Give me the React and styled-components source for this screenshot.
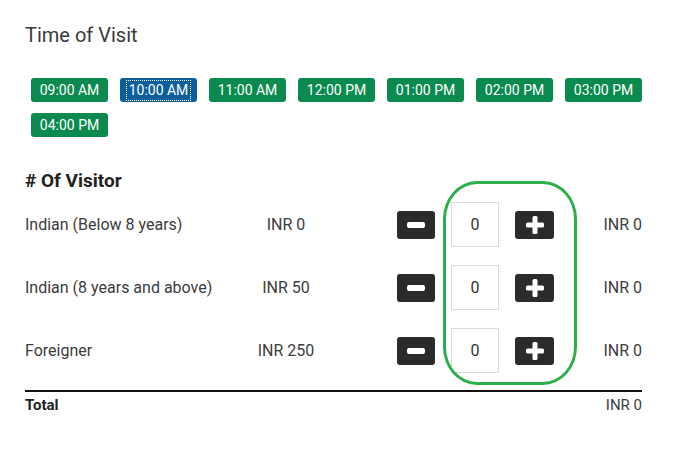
import React from "react";
import styled, { createGlobalStyle } from "styled-components";

const Global = createGlobalStyle`
  html, body { margin: 0; padding: 0; background: #fff; }
  body { font-family: Roboto, "Liberation Sans", Arial, sans-serif; color: #3c3c3c; }
`;

const Page = styled.div`
  position: relative;
  width: 687px;
  height: 458px;
  padding: 23px 25px 0 25px;
  box-sizing: border-box;
`;

const Title = styled.h2`
  margin: 0;
  font-size: 20px;
  line-height: 24px;
  font-weight: 400;
  color: #3a3a3a;
`;

const Slots = styled.div`
  display: flex;
  flex-wrap: wrap;
  row-gap: 11px;
  margin-top: 31px;
  width: 630px;
`;

const Slot = styled.button`
  width: 77px;
  height: 24px;
  margin: 0 6px;
  padding: 0;
  border: none;
  border-radius: 3px;
  background: ${(p) => (p.$active ? "#0d5e9d" : "#0b8a50")};
  color: #fff;
  font-family: Roboto, "Liberation Sans", Arial, sans-serif;
  font-size: 14px;
  line-height: 24px;
  display: flex;
  align-items: center;
  justify-content: center;
  cursor: pointer;
`;

const SlotLabel = styled.span`
  outline: ${(p) => (p.$active ? "1px dotted #fff" : "none")};
  outline-offset: 1px;
  padding: 0 1px;
  line-height: 17px;
`;

const Heading = styled.h3`
  margin: 33px 0 0 0;
  font-size: 19px;
  line-height: 22px;
  font-weight: 700;
  color: #222;
`;

const Rows = styled.div`
  display: flex;
  flex-direction: column;
  gap: 18px;
  margin-top: 10px;
  width: 617px;
`;

const Row = styled.div`
  display: flex;
  align-items: center;
  height: 45px;
  font-size: 16px;
`;

const Label = styled.div`
  width: 200px;
  white-space: nowrap;
`;

const Price = styled.div`
  width: 122px;
  text-align: center;
`;

const Stepper = styled.div`
  display: flex;
  align-items: center;
  gap: 16px;
  margin-left: 50px;
`;

const StepButton = styled.button`
  width: ${(p) => p.$w}px;
  height: 28px;
  padding: 0;
  border: none;
  border-radius: 3px;
  background: #2b2b2b;
  display: flex;
  align-items: center;
  justify-content: center;
`;

const Count = styled.div`
  width: 48px;
  height: 45px;
  box-sizing: border-box;
  border: 1px solid #dcdcdc;
  display: flex;
  align-items: center;
  justify-content: center;
  font-size: 16px;
  color: #333;
`;

const Amount = styled.div`
  flex: 1;
  text-align: right;
`;

const TotalRow = styled.div`
  display: flex;
  justify-content: space-between;
  width: 617px;
  margin-top: 17px;
  border-top: 2px solid #111;
  padding-top: 4px;
  font-size: 15px;
  line-height: 18px;
`;

const TotalLabel = styled.span`
  font-weight: 700;
  color: #222;
`;

const Highlight = styled.div`
  position: absolute;
  left: 443px;
  top: 181px;
  width: 134px;
  height: 204px;
  box-sizing: border-box;
  border: 3px solid #2eae4b;
  border-radius: 34px / 38px;
  pointer-events: none;
`;

const Minus = () => (
  <svg width="18" height="6" viewBox="0 0 18 6">
    <rect x="0" y="0" width="18" height="6" rx="2" fill="#fff" />
  </svg>
);

const Plus = () => (
  <svg width="18" height="18" viewBox="0 0 18 18">
    <rect x="0" y="6.5" width="18" height="5" rx="1.5" fill="#fff" />
    <rect x="6.5" y="0" width="5" height="18" rx="1.5" fill="#fff" />
  </svg>
);

const slots = ["09:00 AM", "10:00 AM", "11:00 AM", "12:00 PM", "01:00 PM", "02:00 PM", "03:00 PM", "04:00 PM"];
const visitors = [
  { label: "Indian (Below 8 years)", price: "INR 0" },
  { label: "Indian (8 years and above)", price: "INR 50" },
  { label: "Foreigner", price: "INR 250" },
];

export default function App() {
  return (
    <Page>
      <Global />
      <Title>Time of Visit</Title>
      <Slots>
        {slots.map((s) => (
          <Slot key={s} $active={s === "10:00 AM"}>
            <SlotLabel $active={s === "10:00 AM"}>{s}</SlotLabel>
          </Slot>
        ))}
      </Slots>
      <Heading># Of Visitor</Heading>
      <Rows>
        {visitors.map((v) => (
          <Row key={v.label}>
            <Label>{v.label}</Label>
            <Price>{v.price}</Price>
            <Stepper>
              <StepButton $w={38}><Minus /></StepButton>
              <Count>0</Count>
              <StepButton $w={39}><Plus /></StepButton>
            </Stepper>
            <Amount>INR 0</Amount>
          </Row>
        ))}
      </Rows>
      <TotalRow>
        <TotalLabel>Total</TotalLabel>
        <span>INR 0</span>
      </TotalRow>
      <Highlight />
    </Page>
  );
}
